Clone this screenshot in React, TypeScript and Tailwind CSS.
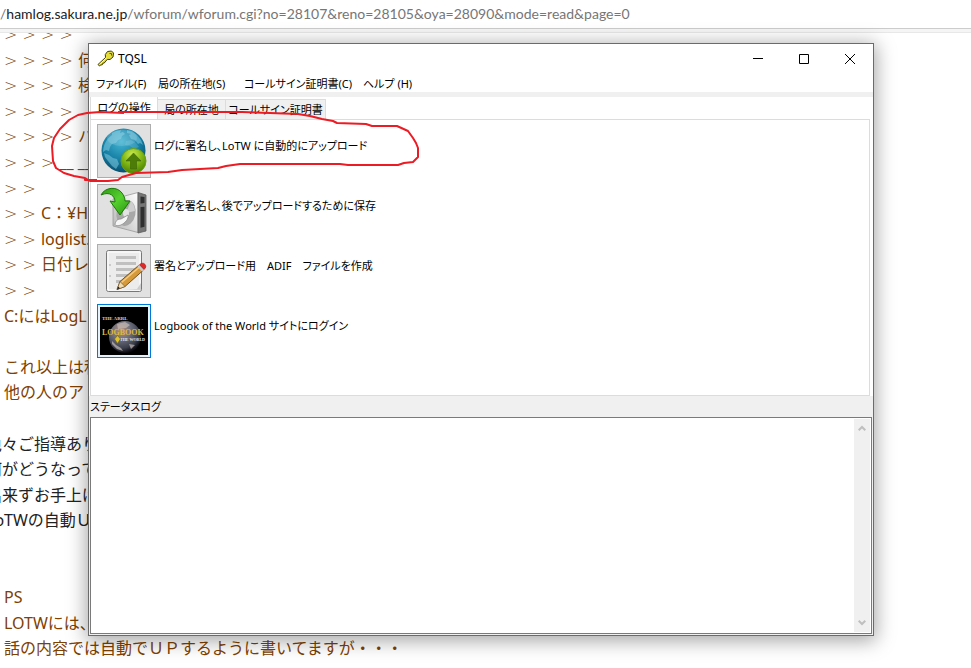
import type { ReactNode } from 'react'
import clsx from 'clsx'

const quoted = [
  { marks: 4, text: '' },
  { marks: 4, text: '何' },
  { marks: 4, text: '検' },
  { marks: 4, text: '' },
  { marks: 4, text: 'ハ' },
  { marks: 3, text: '__ __' },
  { marks: 2, text: '' },
  { marks: 2, text: 'C：¥H' },
  { marks: 2, text: 'loglist.' },
  { marks: 2, text: '日付レ' },
  { marks: 2, text: '' },
  { marks: 0, text: 'C:にはLogL' },
  { marks: 0, text: '' },
  { marks: 0, text: 'これ以上は私' },
  { marks: 0, text: '他の人のアド' },
  { marks: 0, text: '' },
]

const reply = ['色々ご指導あり', '何がどうなって', '出来ずお手上げ', 'LoTWの自動Ｕ']

const postscript = ['', '', 'PS', 'LOTWには、', '話の内容では自動でＵＰするように書いてますが・・・']

const menus = [
  { title: 'ファイル(F)', width: 'w-[62px]' },
  { title: '局の所在地(S)', width: 'w-[86px]' },
  { title: 'コールサイン証明書(C)', width: 'w-[119px]' },
  { title: 'ヘルプ (H)', width: 'w-[62px]' },
]

function Line({ marks = 0, children }: { marks?: number; children?: ReactNode }) {
  return (
    <p className="h-[1.6em] whitespace-pre">
      {marks > 0 && <span className="font-['DejaVu_Sans'] font-extralight">{'> '.repeat(marks)}</span>}
      {children}
    </p>
  )
}

function KeyIcon() {
  return (
    <svg viewBox="0 0 18 18" className="h-[18px] w-[18px]" aria-hidden="true">
      <path
        d="M1 14.500 8.500 7.500 8.300 4.500 10.500 1.500 14.500 1l2 2-.5 4-3 2.500-2.700-.1L8 12l-.7 1-1.500.2-.4 1.500-1.600.3-1.300 1z"
        fill="#e4dc3c"
        stroke="#3d3a0c"
        strokeWidth="1"
      />
      <path d="M2.500 14.300 9.500 7.700" stroke="#fffca8" />
      <path d="M12.500 3.500h2v2" stroke="#5a5510" fill="none" />
    </svg>
  )
}

function GlobeIcon() {
  return (
    <svg viewBox="0 0 48 48" className="h-12 w-12" aria-hidden="true">
      <defs>
        <radialGradient id="sea" cx="45%" cy="30%" r="70%">
          <stop offset="0" stopColor="#45b4d2" />
          <stop offset="0.6" stopColor="#167fa4" />
          <stop offset="1" stopColor="#07506f" />
        </radialGradient>
        <radialGradient id="leaf" cx="45%" cy="25%" r="75%">
          <stop offset="0" stopColor="#cdeb50" />
          <stop offset="0.5" stopColor="#84ba16" />
          <stop offset="1" stopColor="#4b8204" />
        </radialGradient>
      </defs>
      <circle cx="23.500" cy="23.500" r="22" fill="url(#sea)" />
      <g fill="#7fcbe2" opacity="0.55">
        <path d="M12 6l4-2 5-1-1 3 3-1 2 2-3 2-1 3-3 1-2 3-4 1-2 3-1 4-3-1-3 2c0-6 3-13 9-17z" />
        <path d="M27 3l5 1 5 4 4 5 2 5-3-2-2 1-3-4-4-1-2-4 2-1-4-1z" />
        <path d="M4 26l5 2 4 3 4 1 2 5-3 5-4-3-4-5-3-4z" />
        <path d="M26 14l5-1 5 3 3 4-5 2-4-3-5-1z" opacity=".5" />
      </g>
      <ellipse cx="22" cy="11" rx="15" ry="8" fill="#fff" opacity="0.14" />
      <circle cx="33.500" cy="34" r="12.500" fill="url(#leaf)" stroke="#6b9e12" strokeWidth="1" />
      <path d="M33.500 26l7.500 8h-4.500v8h-6v-8H26z" fill="#4d7c08" stroke="#3d6604" strokeWidth="0.6" />
    </svg>
  )
}

function DiskIcon() {
  return (
    <svg viewBox="0 0 48 48" className="h-12 w-12" aria-hidden="true">
      <defs>
        <linearGradient id="case" x1="0" y1="1" x2="1" y2="0">
          <stop offset="0" stopColor="#b5b5b5" />
          <stop offset="1" stopColor="#ffffff" />
        </linearGradient>
        <linearGradient id="arrow" x1="0" y1="0" x2="1" y2="1">
          <stop offset="0" stopColor="#2d9b12" />
          <stop offset="0.5" stopColor="#56d02f" />
          <stop offset="1" stopColor="#27930c" />
        </linearGradient>
      </defs>
      <path d="M13 12 38 5.500v40L13 39z" fill="url(#case)" stroke="#999" strokeWidth="0.8" />
      <path d="M38 5.500 46 8v36l-8 2z" fill="#767676" stroke="#5c5c5c" strokeWidth="0.8" />
      <path d="M40.500 9.500 44.500 10v6l-4 .5zM40.500 20l4-.3v20l-4 1z" fill="#2f2f2f" />
      <ellipse cx="26" cy="26" rx="9.500" ry="13" fill="#a8a8a8" transform="rotate(12 26 26)" />
      <path d="M26 26 31 14a9 13 0 0 1 4 10z" fill="#cfcfcf" />
      <ellipse cx="26" cy="26" rx="3" ry="4" fill="#e3e3e3" />
      <path d="M15 37c1-4 3-5 6-5l7-4c1 4-3 8-7 10-3 1-6 1-6-1z" fill="#f6f6f6" stroke="#8a8a8a" strokeWidth="0.8" />
      <path
        d="M1 8C5 0 17-1 22 6c2 3 3 5 3 8h5L20 28 10 14l5 1C15 9 10 4 1 8z"
        fill="url(#arrow)"
        stroke="#1c7a08"
        strokeWidth="1"
      />
    </svg>
  )
}

function NoteIcon() {
  return (
    <svg viewBox="0 0 48 48" className="h-12 w-12" aria-hidden="true">
      <rect x="6.500" y="3.500" width="35" height="41" rx="2" fill="#ececec" stroke="#777" />
      <rect x="8" y="5" width="32" height="38" fill="none" stroke="#fff" />
      <g fill="#c0c0c0">
        <rect x="16" y="9" width="20" height="3" />
        <rect x="16" y="15" width="20" height="3" />
        <rect x="16" y="21" width="20" height="3" />
        <rect x="16" y="27" width="18" height="3" />
        <rect x="16" y="33" width="12" height="3" />
        <circle cx="10" cy="18" r="1" />
        <circle cx="10" cy="29" r="1" />
      </g>
      <path d="M20 42h17l4-6v7z" fill="#bdbdbd" opacity="0.7" />
      <path d="M17 42.500 20 34.500 38.500 18.500 43 23.500 25 39.500z" fill="#d69a3b" stroke="#6b4715" strokeWidth="0.9" />
      <path d="M21.500 35.500 39.500 20" stroke="#f5cd84" strokeWidth="1.500" />
      <path d="M17 42.500 20 34.500 25 39.500z" fill="#f0dcb2" stroke="#6b4715" strokeWidth="0.6" />
      <path d="M17 42.500 18.300 39.500 20 41.300z" fill="#222" />
      <path d="M37.500 19.500 40 17.300 44.500 22.300 42 24.500z" fill="#c9c9c9" />
      <path d="M39.500 17.700 41 16.500c3-1.500 6 2 4.300 4.500L44 22.500z" fill="#e02828" stroke="#9c1515" strokeWidth="0.6" />
    </svg>
  )
}

function LogbookIcon() {
  return (
    <svg viewBox="0 0 48 48" className="h-12 w-12" aria-hidden="true">
      <defs>
        <radialGradient id="planet" cx="38%" cy="28%" r="72%">
          <stop offset="0" stopColor="#b98b72" />
          <stop offset="0.4" stopColor="#6f7180" />
          <stop offset="0.8" stopColor="#3a3d4a" />
          <stop offset="1" stopColor="#0b0b10" />
        </radialGradient>
      </defs>
      <rect width="48" height="48" fill="#000" />
      <circle cx="25" cy="30" r="16" fill="url(#planet)" />
      <path d="M17 17l8-2 5 3-4 3-8 1zM12 34l4 4 5 3 2 3-6-2-5-5zM29 37l6 1-4 4z" fill="#c5bab5" opacity="0.7" />
      <text x="2" y="13" fontSize="5" fontFamily="Liberation Serif, serif" fontWeight="700" fill="#cfd3e6">
        THE ARRL
      </text>
      <text x="2" y="28" fontSize="8" fontFamily="Liberation Serif, serif" fontWeight="700" fill="#dcb93c">
        LOGBOOK
      </text>
      <text x="20" y="34" fontSize="4" fontFamily="Liberation Serif, serif" fontWeight="700" fill="#e5e5ea">
        THE WORLD
      </text>
      <path d="M17.500 28.500 20.500 32l-3 4.500-3-4.500z" fill="#e0c22c" stroke="#6e5c0a" strokeWidth="0.6" />
    </svg>
  )
}

const actions = [
  { id: 'upload', text: 'ログに署名し、LoTW に自動的にアップロード', icon: <GlobeIcon /> },
  { id: 'save', text: 'ログを署名し、後でアップロードするために保存', icon: <DiskIcon /> },
  { id: 'adif', text: '署名とアップロード用　ADIF　ファイルを作成', icon: <NoteIcon /> },
  { id: 'login', text: 'Logbook of the World サイトにログイン', icon: <LogbookIcon />, focused: true },
]

function Chevron({ down = false }: { down?: boolean }) {
  return (
    <svg viewBox="0 0 8 6" className="h-[6px] w-2" fill="none" stroke="#bfbfbf" strokeWidth="2" aria-hidden="true">
      <path d={down ? 'M.7.7 4 4l3.300-3.300' : 'M.7 5.300 4 2l3.300 3.300'} />
    </svg>
  )
}

function TitleBar() {
  return (
    <div className="flex h-[30px] items-center pl-2">
      <KeyIcon />
      <h1 className="ml-[3px] flex-1 text-xs">TQSL</h1>
      <button aria-label="最小化" className="flex h-full w-[46px] items-center justify-center">
        <svg viewBox="0 0 10 10" className="h-[10px] w-[10px]" stroke="#000">
          <path d="M0 4.500h10" />
        </svg>
      </button>
      <button aria-label="最大化" className="flex h-full w-[46px] items-center justify-center">
        <svg viewBox="0 0 10 10" className="h-[10px] w-[10px]" stroke="#000" fill="none">
          <path d="M.5.5h9v9h-9z" />
        </svg>
      </button>
      <button aria-label="閉じる" className="flex h-full w-[46px] items-center justify-center">
        <svg viewBox="0 0 10 10" className="h-[10px] w-[10px]" stroke="#000">
          <path d="M0 0l10 10M10 0 0 10" />
        </svg>
      </button>
    </div>
  )
}

function TqslWindow() {
  return (
    <section className="absolute top-[43px] right-[97px] left-[88px] border border-[#6b6b6b] bg-white font-['Noto_Sans','Noto_Sans_CJK_JP',sans-serif] text-[11px] text-black shadow-[0_3px_18px_2px_rgba(0,0,0,0.35)] [font-feature-settings:'palt']">
      <TitleBar />
      <nav className="flex h-[18px] pl-[7px] leading-5">
        {menus.map((menu) => (
          <button key={menu.title} className={clsx('text-left whitespace-nowrap', menu.width)}>
            {menu.title}
          </button>
        ))}
      </nav>
      <div className="h-[5px] bg-[#f0f0f0]" />

      <div className="pr-[3px] pl-px">
        <div role="tablist" className="flex h-[22px] items-end leading-5">
          <button
            role="tab"
            aria-selected="true"
            className="h-full w-[68px] border-x border-[#dcdcdc] bg-white whitespace-nowrap"
          >
            ログの操作
          </button>
          <button
            role="tab"
            className="h-5 w-[68px] border-t border-r border-[#dcdcdc] bg-[#f0f0f0] whitespace-nowrap"
          >
            局の所在地
          </button>
          <button
            role="tab"
            className="h-5 w-[100px] border-t border-r border-[#dcdcdc] bg-[#f0f0f0] whitespace-nowrap"
          >
            コールサイン証明書
          </button>
        </div>
        <div role="tabpanel" className="flex h-[277px] flex-col gap-[6px] border border-[#dcdcdc] pt-1 pl-[6px]">
          {actions.map((action) => (
            <div key={action.id} className="flex gap-[3px]">
              <button
                id={action.id}
                className={clsx(
                  'flex h-[54px] w-[54px] shrink-0 items-center justify-center border',
                  action.focused ? 'border-[#0078d7] bg-[#e5f1fb]' : 'border-[#adadad] bg-[#e1e1e1]'
                )}
              >
                {action.icon}
              </button>
              <label htmlFor={action.id} className="pt-[14px] leading-4 whitespace-nowrap">
                {action.text}
              </label>
            </div>
          ))}
        </div>
      </div>

      <div className="bg-[#f0f0f0] px-px pb-px">
        <label htmlFor="status" className="block h-[21px] leading-[22px]">
          ステータスログ
        </label>
        <div className="flex h-[217px] border border-[#7a7a7a] bg-white p-px">
          <textarea id="status" readOnly className="flex-1 resize-none outline-none" />
          <div className="flex w-4 flex-col items-center justify-between bg-[#f0f0f0] py-[6px]">
            <Chevron />
            <Chevron down />
          </div>
        </div>
      </div>
    </section>
  )
}

export default function App() {
  return (
    <div className="relative min-h-screen overflow-hidden bg-white">
      <header className="h-[33px] border-b border-[#e8e8e8] bg-[#f5f5f5]">
        <div className="h-[29px] border-b border-[#cccccc] bg-white font-[Lato,sans-serif] text-sm leading-[27px] whitespace-nowrap text-[#767676]">
          /<span className="text-[#202124]">hamlog.sakura.ne.jp</span>
          /wforum/wforum.cgi?no=28107&amp;reno=28105&amp;oya=28090&amp;mode=read&amp;page=0
        </div>
      </header>

      <main className="overflow-hidden pl-1 font-['Noto_Sans','Noto_Sans_CJK_JP',sans-serif] text-base leading-[1.6] text-[#804000]">
        <div className="-mt-[11px]">
          {quoted.map((line, i) => (
            <Line key={i} marks={line.marks}>
              {line.text}
            </Line>
          ))}
          <div className="-ml-[18px] text-[#222222]">
            {reply.map((text) => (
              <Line key={text}>{text}</Line>
            ))}
          </div>
          {postscript.map((text, i) => (
            <Line key={i}>{text}</Line>
          ))}
        </div>
      </main>

      <TqslWindow />

      {/* red pen mark around the upload action */}
      <svg
        viewBox="0 0 372 74"
        className="pointer-events-none absolute top-[110px] left-[50px] h-[74px] w-[372px]"
        fill="none"
        stroke="#ed1c24"
        strokeWidth="2"
        strokeLinejoin="round"
        aria-hidden="true"
      >
        <path d="M74 3 50 2 37 3 28 5 19 10 10 19 4 28 2 36 3 51 6 58 14 63 24 66 35 68 40 71 58 71 68 70 72 67 86 63 118 62 132 60 168 58 176 56 190 54 290 54 298 55 348 55 354 53 363 52 368 47 368 38 366 33 363 28 358 21 347 16 322 16 316 14 287 13 283 11 272 9 260 6 248 4 220 3 192 2H68M35 68v2h12" />
      </svg>
    </div>
  )
}
